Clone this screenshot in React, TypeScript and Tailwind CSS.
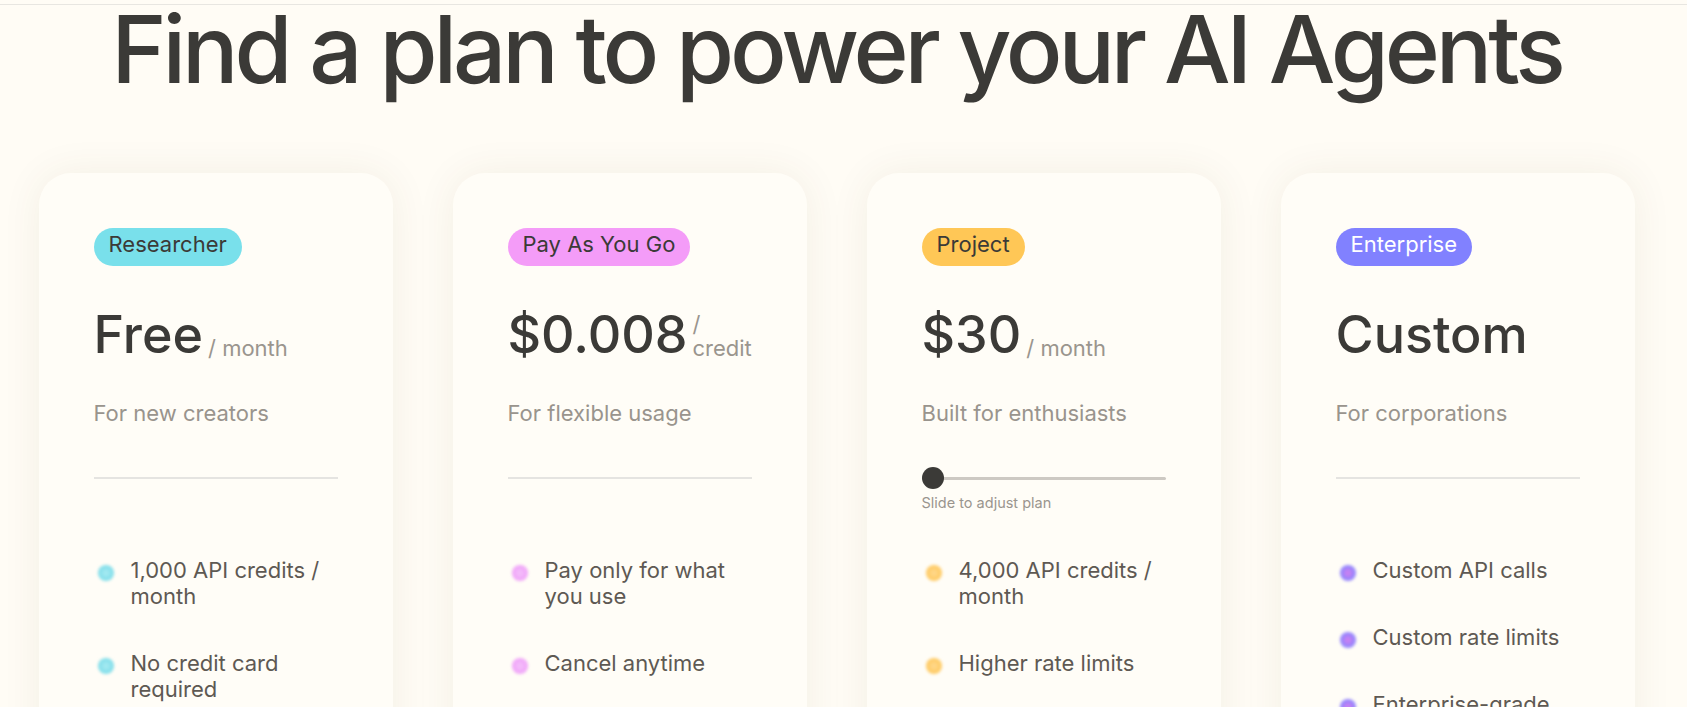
import React from "react";

type Plan = {
  badge: string;
  badgeClass: string;
  price: string;
  suffix?: string;
  suffixClass?: string;
  subtitle: string;
  slider?: boolean;
  dotClass: string;
  features: string[];
};

const plans: Plan[] = [
  {
    badge: "Researcher",
    badgeClass: "bg-[#79e0eb] text-[#3b3a37]",
    price: "Free",
    suffix: "/ month",
    subtitle: "For new creators",
    dotClass: "bg-[radial-gradient(circle,#a9ebf2_0%,#7fdde9_70%)]",
    features: ["1,000 API credits / month", "No credit card required", "Community support"],
  },
  {
    badge: "Pay As You Go",
    badgeClass: "bg-[#f49cf8] text-[#3b3a37]",
    price: "$0.008",
    suffix: "/ credit",
    suffixClass: "w-[50px]",
    subtitle: "For flexible usage",
    dotClass: "bg-[radial-gradient(circle,#f4c0fb_0%,#f0a2f8_70%)]",
    features: ["Pay only for what you use", "Cancel anytime", "Standard rate limits"],
  },
  {
    badge: "Project",
    badgeClass: "bg-[#ffc756] text-[#3b3a37]",
    price: "$30",
    suffix: "/ month",
    subtitle: "Built for enthusiasts",
    slider: true,
    dotClass: "bg-[radial-gradient(circle,#ffd98f_0%,#ffc95f_70%)]",
    features: ["4,000 API credits / month", "Higher rate limits", "Email support"],
  },
  {
    badge: "Enterprise",
    badgeClass: "bg-[#8181ff] text-white",
    price: "Custom",
    subtitle: "For corporations",
    dotClass: "bg-[radial-gradient(circle,#d47ff0_0%,#8686ff_75%)]",
    features: ["Custom API calls", "Custom rate limits", "Enterprise-grade security"],
  },
];

function Card({ plan }: { plan: Plan }) {
  return (
    <div className="w-[354px] h-[640px] rounded-[32px] bg-[#fffdf7] shadow-[0_0_40px_rgba(90,70,30,0.07)] px-[55px] pt-[55px]">
      <div className="flex">
        <span
          className={`h-[38px] flex items-center pb-[5px] px-[15px] rounded-full text-[22px] leading-none whitespace-nowrap ${plan.badgeClass}`}
        >
          {plan.badge}
        </span>
      </div>
      <div className="mt-[43px] flex items-end">
        <span className="text-[52px] leading-none font-medium text-[#3b3a37] whitespace-nowrap">
          {plan.price}
        </span>
        {plan.suffix && (
          <span className={`ml-[5px] text-[22px] leading-[1.1] text-[#9a958e] ${plan.suffixClass ?? ""}`}>
            {plan.suffix}
          </span>
        )}
      </div>
      <div className="mt-[37px] text-[22px] leading-[1.43] text-[#99948d]">{plan.subtitle}</div>
      <div className="mt-[38px] h-[90px] flex flex-col">
        {plan.slider ? (
          <div>
            <div className="relative h-[22px] flex items-center">
              <div className="h-[3px] w-full bg-[#cdc9c3] rounded-full" />
              <div className="absolute left-0 top-0 w-[22px] h-[22px] rounded-full bg-[#3b3a37]" />
            </div>
            <div className="mt-[4px] text-[14.5px] leading-[1.4] text-[#9a958e]">Slide to adjust plan</div>
          </div>
        ) : (
          <div className="mt-[10px] h-[2px] bg-[#e5e4e1]" />
        )}
      </div>
      <ul className="flex flex-col gap-[41px]">
        {plan.features.map((f) => (
          <li key={f} className="flex items-start gap-[13px]">
            <span className="w-6 flex justify-center shrink-0 pt-[8px]">
              <span className={`block w-4 h-4 rounded-full blur-[1.5px] ${plan.dotClass}`} />
            </span>
            <span className="text-[22px] leading-[26px] text-[#5e5953]">{f}</span>
          </li>
        ))}
      </ul>
    </div>
  );
}

export default function App() {
  return (
    <div
      className="min-h-[707px] w-full bg-[#fffcf5] overflow-hidden"
      style={{ fontFamily: "Inter, 'Noto Sans', sans-serif" }}
    >
      <div className="h-[4px]" />
      <div className="h-px bg-[#e8e6e1]" />
      <div className="w-[1673px] flex flex-col items-center">
        <h1 className="mt-[2px] text-[94px] leading-[0.9] tracking-[-0.044em] text-[#3b3a37] font-medium whitespace-nowrap">
          Find a plan to power your AI Agents
        </h1>
        <div className="mt-[81px] flex gap-[60px]">
          {plans.map((p) => (
            <Card key={p.badge} plan={p} />
          ))}
        </div>
      </div>
    </div>
  );
}
